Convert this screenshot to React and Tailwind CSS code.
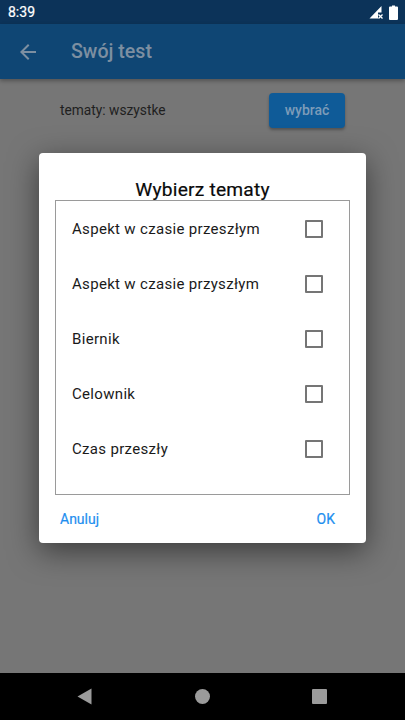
const topics = ["Aspekt w czasie przeszłym", "Aspekt w czasie przyszłym", "Biernik", "Celownik", "Czas przeszły"];

export default function App() {
  return (
    <div className="relative w-[405px] h-[720px] overflow-hidden flex flex-col bg-[#767676] font-['Roboto',sans-serif]">
      <div className="h-6 shrink-0 bg-[#0c3359] flex items-center justify-between pl-2 pr-[7px]">
        <span className="text-[14px] text-white leading-none [-webkit-text-stroke:0.2px_#fff]">8:39</span>
        <div className="flex items-center gap-[6px]">
          <svg width="14" height="14" viewBox="0 0 14 14">
            <path d="M0.5 13.5 L12.5 1 V7.5 H9 V13.5 Z" fill="#fff" />
            <path d="M9.5 9.5 L13.5 13.5 M13.5 9.5 L9.5 13.5" stroke="#fff" strokeWidth="1.3" />
          </svg>
          <svg width="9" height="15" viewBox="0 0 9 15">
            <path d="M3 0.5 H6 V1.5 H8 Q9 1.5 9 2.5 V14 Q9 15 8 15 H1 Q0 15 0 14 V2.5 Q0 1.5 1 1.5 H3 Z" fill="#fff" />
          </svg>
        </div>
      </div>
      <div className="h-[55px] shrink-0 bg-[#0f4674] flex items-center pl-[16px] shadow-[0_2px_4px_rgba(0,0,0,0.3)] z-10">
        <svg width="24" height="24" viewBox="0 0 24 24" fill="#7d8fa1" className="shrink-0">
          <path d="M20 11H7.83l5.59-5.59L12 4l-8 8 8 8 1.41-1.41L7.83 13H20v-2z" />
        </svg>
        <span className="ml-[31px] text-[19.6px] font-medium text-[#7d8fa1]">Swój test</span>
      </div>
      <div className="flex items-center justify-between pl-[60px] pr-[60px] pt-[14px]">
        <span className="text-[13.75px] text-[#1f1f1f]">tematy: wszystke</span>
        <button className="w-[76px] h-[35px] rounded-[4px] bg-[#0f5b98] text-[14px] font-medium text-[#7d9cb9] shadow-[0_2px_3px_rgba(0,0,0,0.3)]">wybrać</button>
      </div>
      <div className="flex-1" />
      <div className="h-[47px] shrink-0 bg-black flex items-center">
        <div className="flex w-full items-center justify-between pl-[77px] pr-[78px]">
          <svg width="15" height="17" viewBox="0 0 15 17"><path d="M14.5 0.5 V16.5 L0.5 8.5 Z" fill="#9b9b9b" /></svg>
          <span className="w-[15px] h-[15px] rounded-full bg-[#9b9b9b]" />
          <span className="w-[15px] h-[15px] rounded-[1px] bg-[#9b9b9b]" />
        </div>
      </div>

      <div className="absolute left-[39px] top-[153px] w-[327px] h-[390px] bg-white rounded-[4px] shadow-[0_8px_30px_rgba(0,0,0,0.5)] flex flex-col items-center">
        <h2 className="mt-[25px] text-[19.2px] leading-[24px] font-normal text-[#0a0a0a] tracking-[0.2px] [-webkit-text-stroke:0.2px_#0a0a0a]">Wybierz tematy</h2>
        <div className="mt-[-2px] w-[295px] h-[295px] border border-[#9a9a9a]">
          {topics.map((t) => (
            <div key={t} className="h-[55px] flex items-center justify-between pl-[16px] pr-[26px]">
              <span className="text-[15px] text-[#1a1a1a] tracking-[0.32px] mt-[2px]">{t}</span>
              <span className="w-[18px] h-[18px] border-2 border-[#757575] rounded-[1px]" />
            </div>
          ))}
        </div>
        <div className="w-full flex items-center justify-between pl-[21px] pr-[31px] mt-[14px]">
          <span className="text-[14px] text-[#1f8fef] [-webkit-text-stroke:0.2px_#1f8fef]">Anuluj</span>
          <span className="text-[14px] text-[#1f8fef] [-webkit-text-stroke:0.2px_#1f8fef]">OK</span>
        </div>
      </div>
    </div>
  );
}
